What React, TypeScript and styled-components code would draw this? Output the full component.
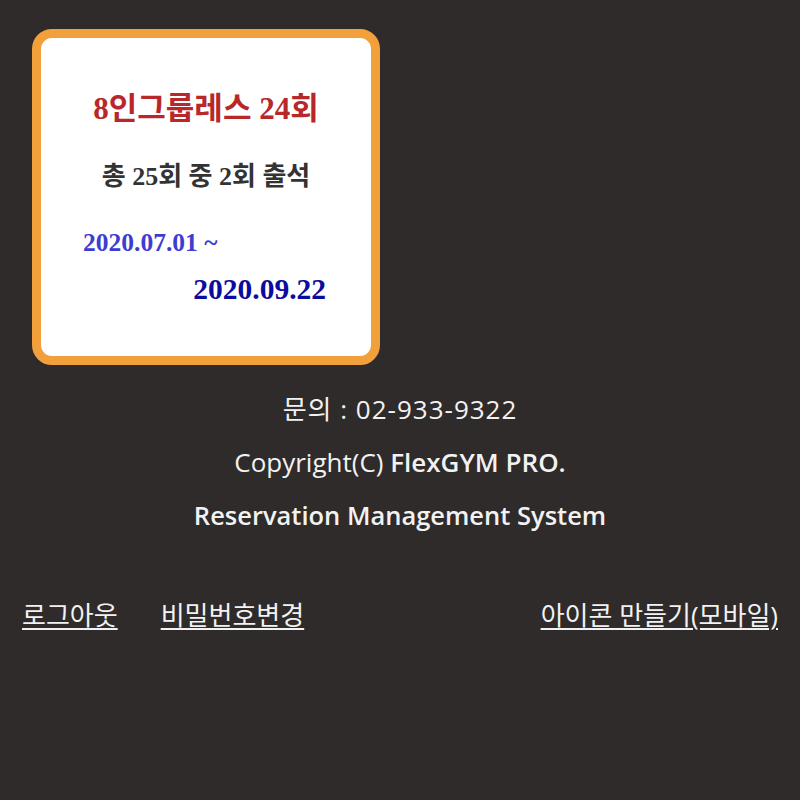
import styled, { createGlobalStyle } from "styled-components";

const GlobalStyle = createGlobalStyle`
  html, body {
    margin: 0;
    padding: 0;
    background: #2e2b2a;
  }
  body {
    font-family: "Open Sans", "Noto Sans CJK KR", sans-serif;
  }
`;

const App = () => {
  return (
    <Page>
      <GlobalStyle />
      <TicketCard>
        <TicketTitle>8인그룹레스 24회</TicketTitle>
        <TicketCount>총 25회 중 2회 출석</TicketCount>
        <DateStart>2020.07.01 ~</DateStart>
        <DateEnd>2020.09.22</DateEnd>
      </TicketCard>

      <Footer>
        <FooterLine $spacing={1}>문의 : 02-933-9322</FooterLine>
        <FooterLine>
          Copyright(C) <strong>FlexGYM PRO.</strong>
        </FooterLine>
        <FooterLine $size={25.5}>
          <strong>Reservation Management System</strong>
        </FooterLine>
      </Footer>

      <LinkRow>
        <LinkGroup>
          <TextLink href="#">로그아웃</TextLink>
          <TextLink href="#">비밀번호변경</TextLink>
        </LinkGroup>
        <TextLink href="#">아이콘 만들기(모바일)</TextLink>
      </LinkRow>
    </Page>
  );
};

export default App;

// page
const Page = styled.div`
  min-height: 800px;
  padding-top: 29px;
  box-sizing: border-box;
  color: #f2f2f2;
`;

// membership card
const TicketCard = styled.div`
  margin-left: 32px;
  width: 348px;
  height: 336px;
  box-sizing: border-box;
  border: 9px solid #f2a03b;
  border-radius: 20px;
  background: #ffffff;
  padding: 52px 0 0;
  display: flex;
  flex-direction: column;
  font-family: "Liberation Serif", "Noto Sans CJK KR", serif;
  font-weight: 700;
`;

const TicketTitle = styled.div`
  text-align: center;
  color: #b8282a;
  font-size: 31px;
  line-height: 38px;
`;

const TicketCount = styled.div`
  margin-top: 33px;
  text-align: center;
  color: #333333;
  font-size: 26px;
  line-height: 32px;
`;

const DateStart = styled.div`
  margin-top: 36px;
  margin-left: 42px;
  color: #3d3dd0;
  font-size: 25.5px;
  line-height: 28px;
`;

const DateEnd = styled.div`
  margin-top: 16px;
  margin-right: 45px;
  align-self: flex-end;
  color: #0b0b9e;
  font-size: 29.5px;
  line-height: 32px;
`;

// footer text
const Footer = styled.div`
  margin-top: 18px;
  display: flex;
  flex-direction: column;
  align-items: center;
`;

const FooterLine = styled.div<{ $spacing?: number; $size?: number }>`
  font-size: ${({ $size }) => $size ?? 26}px;
  line-height: 53px;
  letter-spacing: ${({ $spacing }) => $spacing ?? 0}px;
  strong {
    font-weight: 600;
  }
`;

// bottom links
const LinkRow = styled.div`
  margin-top: 56px;
  padding: 0 22px;
  display: flex;
  justify-content: space-between;
  align-items: center;
`;

const LinkGroup = styled.div`
  display: flex;
  gap: 43px;
`;

const TextLink = styled.a`
  color: #f2f2f2;
  font-size: 26px;
  line-height: 34px;
  text-decoration: underline;
  text-underline-offset: 3px;
`;
